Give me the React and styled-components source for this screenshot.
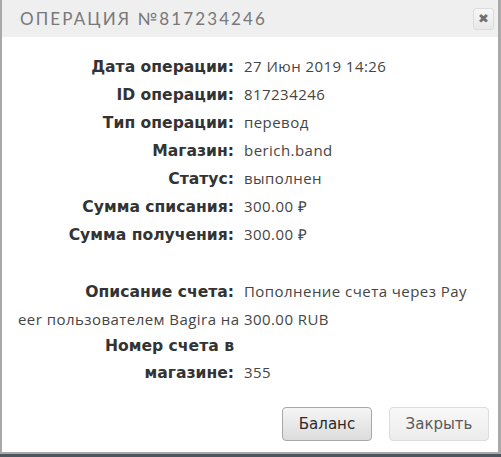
import React from "react"
import styled, { createGlobalStyle } from "styled-components"

const GlobalStyle = createGlobalStyle`
  html, body {
    margin: 0;
    padding: 0;
    background: #4d555e;
  }
  * { box-sizing: border-box; }
`

const Dialog = styled.div`
  width: 501px;
  height: 454px;
  background: #fff;
  border: 2px solid #a9a9a9;
  border-top: none;
  border-right-width: 3px;
  display: flex;
  flex-direction: column;
`

const Header = styled.div`
  height: 37px;
  background: #efefef;
  display: flex;
  align-items: center;
  justify-content: space-between;
  padding: 0 4px 0 18px;
`

const Title = styled.h1`
  margin: 0;
  font-family: "Lato", "Liberation Sans", sans-serif;
  font-weight: 400;
  font-size: 17px;
  letter-spacing: 2.1px;
  color: #787878;
`

const CloseButton = styled.button`
  width: 21px;
  height: 22px;
  padding: 0;
  border: 1px solid #dcdcdc;
  border-radius: 3px;
  background: linear-gradient(#f7f7f7, #e8e8e8);
  color: #707070;
  font-family: "DejaVu Sans", sans-serif;
  font-size: 13px;
  line-height: 20px;
`

const Body = styled.div`
  flex: 1;
  padding: 16px 27px 0 16px;
  font-family: "Open Sans", sans-serif;
  font-size: 15px;
  color: #444;
`

const Row = styled.div`
  line-height: 27.4px;
  min-height: ${p => (p.$empty ? "29px" : "0")};
  word-break: break-all;
`

const Label = styled.span`
  display: inline-block;
  width: 216px;
  text-align: right;
  font-family: "DejaVu Sans", sans-serif;
  font-weight: bold;
  font-size: 15.6px;
  line-height: 27px;
  color: #333;
  word-break: normal;
`

const Value = styled.span`
  margin-left: 10px;
  letter-spacing: 0.45px;
  color: #454545;
`

const Footer = styled.div`
  display: flex;
  justify-content: flex-end;
  gap: 17px;
  padding: 0 9px 11px 0;
`

const Button = styled.button`
  height: 34px;
  min-width: ${p => p.$w}px;
  padding: 0 14px;
  border: 1px solid ${p => (p.$muted ? "#dcdcdc" : "#a8a8a8")};
  border-radius: 4px;
  background: ${p =>
    p.$muted
      ? "linear-gradient(#f8f8f8, #ececec)"
      : "linear-gradient(#f5f5f5, #dcdcdc)"};
  color: ${p => (p.$muted ? "#5a5a5a" : "#2a2a2a")};
  font-family: "DejaVu Sans", sans-serif;
  font-size: 15px;
`

const rows = [
  ["Дата операции:", "27 Июн 2019 14:26"],
  ["ID операции:", "817234246"],
  ["Тип операции:", "перевод"],
  ["Магазин:", "berich.band"],
  ["Статус:", "выполнен"],
  ["Сумма списания:", "300.00 ₽"],
  ["Сумма получения:", "300.00 ₽"],
]

export default function App() {
  return (
    <>
      <GlobalStyle />
      <Dialog>
        <Header>
          <Title>ОПЕРАЦИЯ №817234246</Title>
          <CloseButton>✖</CloseButton>
        </Header>
        <Body>
          {rows.map(([label, value]) => (
            <Row key={label}>
              <Label>{label}</Label>
              <Value>{value}</Value>
            </Row>
          ))}
          <Row $empty />
          <Row>
            <Label>Описание счета:</Label>
            <Value>Пополнение счета через Payeer пользователем Bagira на 300.00 RUB</Value>
          </Row>
          <Row>
            <Label>Номер счета в магазине:</Label>
            <Value>355</Value>
          </Row>
        </Body>
        <Footer>
          <Button $w={90}>Баланс</Button>
          <Button $w={100} $muted>Закрыть</Button>
        </Footer>
      </Dialog>
    </>
  )
}
